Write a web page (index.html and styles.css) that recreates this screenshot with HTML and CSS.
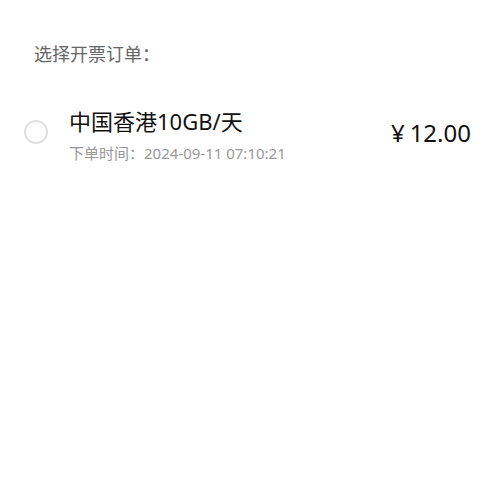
FILE: index.html
```
<!DOCTYPE html>
<html>

<head>
    <title>选择开票订单</title>

    <link rel="stylesheet" href="styles.css">
</head>

<body>

    <main class="page">

        <h2 class="section-title">选择开票订单：</h2>

        <div class="order-row">
            <span class="radio"></span>
            <div class="order-info">
                <div class="order-name">中国香港10GB/天</div>
                <div class="order-time">下单时间：2024-09-11 07:10:21</div>
            </div>
            <div class="order-price"><span class="currency">¥</span>12.00</div>
        </div>

    </main>

</body>

</html>
```

FILE: styles.css
```
* {
    margin: 0;
    padding: 0;
    box-sizing: border-box;
}

html,
body {
    width: 100%;
    height: 100%;
    background-color: #fff;
}

body {
    font-family: "Noto Sans", "Noto Sans CJK SC", sans-serif;
}

.page {
    padding-top: 42px;
}

.section-title {
    font-size: 18px;
    font-weight: normal;
    line-height: 24px;
    color: #666;
    margin-left: 34px;
}

.order-row {
    display: flex;
    align-items: center;
    margin-top: 40px;
    padding: 0 29px 0 24px;
}

.radio {
    width: 24px;
    height: 24px;
    border: 2px solid #e0e0e0;
    border-radius: 50%;
    margin-right: 21px;
    margin-bottom: 5px;
    flex-shrink: 0;
}

.order-info {
    flex: 1;
}

.order-name {
    font-size: 22px;
    line-height: 30px;
    color: #111;
}

.order-time {
    font-size: 15px;
    line-height: 20px;
    margin-top: 7px;
    color: #999;
}

.order-price {
    font-size: 24px;
    line-height: 30px;
    color: #111;
    margin-bottom: 4px;
}

.currency {
    margin-right: 5px;
}
```
